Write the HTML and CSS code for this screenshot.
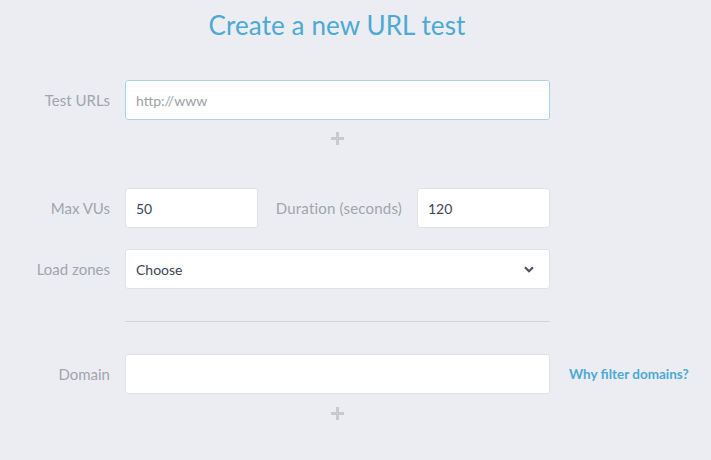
FILE: index.html
```html
<!DOCTYPE html>
<html>
<head>
<meta charset="utf-8">
<link rel="stylesheet" href="styles.css">
</head>
<body>
<div class="page">
  <h1 class="title">Create a new URL test</h1>
  <div class="form">
    <div class="row row-urls">
      <label class="label">Test URLs</label>
      <div class="field field-focus"><span class="placeholder">http://www</span></div>
    </div>
    <div class="plus-row"><span class="plus"></span></div>

    <div class="row row-vus">
      <label class="label">Max VUs</label>
      <div class="field field-small"><span class="value">50</span></div>
      <label class="label label-inline">Duration (seconds)</label>
      <div class="field field-small"><span class="value">120</span></div>
    </div>

    <div class="row row-zones">
      <label class="label">Load zones</label>
      <div class="field select">
        <span class="value">Choose</span>
        <svg class="chevron" width="10" height="7" viewBox="0 0 10 7"><path d="M1 1.2 L5 5.2 L9 1.2" fill="none" stroke="#4a5466" stroke-width="2.2"/></svg>
      </div>
    </div>

    <div class="row row-divider">
      <div class="label"></div>
      <div class="divider"></div>
    </div>

    <div class="row row-domain">
      <label class="label">Domain</label>
      <div class="field"></div>
      <a class="help-link">Why filter domains?</a>
    </div>
    <div class="plus-row"><span class="plus"></span></div>
  </div>
</div>
</body>
</html>
```

FILE: styles.css
```css
html, body {
  margin: 0;
  padding: 0;
  background: #ecedf2;
}
body {
  font-family: "Lato", "Open Sans", sans-serif;
  width: 711px;
  height: 460px;
  overflow: hidden;
}
.page {
  width: 674px;
  padding-top: 7px;
}
.title {
  margin: 0;
  text-align: center;
  font-weight: 400;
  font-size: 26px;
  line-height: 36px;
  color: #4ba9d2;
  letter-spacing: 0.1px;
}
.form {
  margin-top: 37px;
  display: flex;
  flex-direction: column;
}
.row {
  display: flex;
  align-items: center;
}
.row-vus {
  width: 550px;
}
.label {
  width: 110px;
  flex: none;
  text-align: right;
  font-size: 15px;
  color: #a0a5ae;
  margin-right: 15px;
}
.label-inline {
  width: auto;
  flex: 1;
  margin-left: 15px;
  margin-right: 15px;
  letter-spacing: 0.2px;
}
.field {
  box-sizing: border-box;
  width: 425px;
  height: 40px;
  background: #fff;
  border: 1px solid #dfe1e6;
  border-radius: 3px;
  display: flex;
  align-items: center;
  padding: 0 10px;
  font-size: 14px;
  color: #3b4556;
  flex: none;
}
.field-focus {
  border-color: #a8d4e9;
}
.field-small {
  width: 133px;
}
.placeholder {
  color: #9ba1a9;
}
.select {
  justify-content: space-between;
  padding-right: 15px;
}
.chevron {
  display: block;
}
.plus-row {
  display: flex;
  justify-content: center;
  height: 37px;
  align-items: center;
}
.plus {
  position: relative;
  width: 13px;
  height: 13px;
}
.plus::before, .plus::after {
  content: "";
  position: absolute;
  background: #c9cacf;
}
.plus::before {
  left: 5px;
  top: 0;
  width: 3px;
  height: 13px;
}
.plus::after {
  top: 5px;
  left: 0;
  width: 13px;
  height: 3px;
}
.row-vus {
  margin-top: 31px;
}
.row-zones {
  margin-top: 21px;
}
.row-divider {
  margin-top: 32px;
}
.divider {
  width: 425px;
  height: 1px;
  background: #d3d5da;
}
.row-domain {
  margin-top: 32px;
}
.help-link {
  margin-left: 19px;
  font-size: 13.5px;
  font-weight: 700;
  color: #4ba9d2;
  white-space: nowrap;
}
.row-domain + .plus-row {
  height: 38px;
}
```
